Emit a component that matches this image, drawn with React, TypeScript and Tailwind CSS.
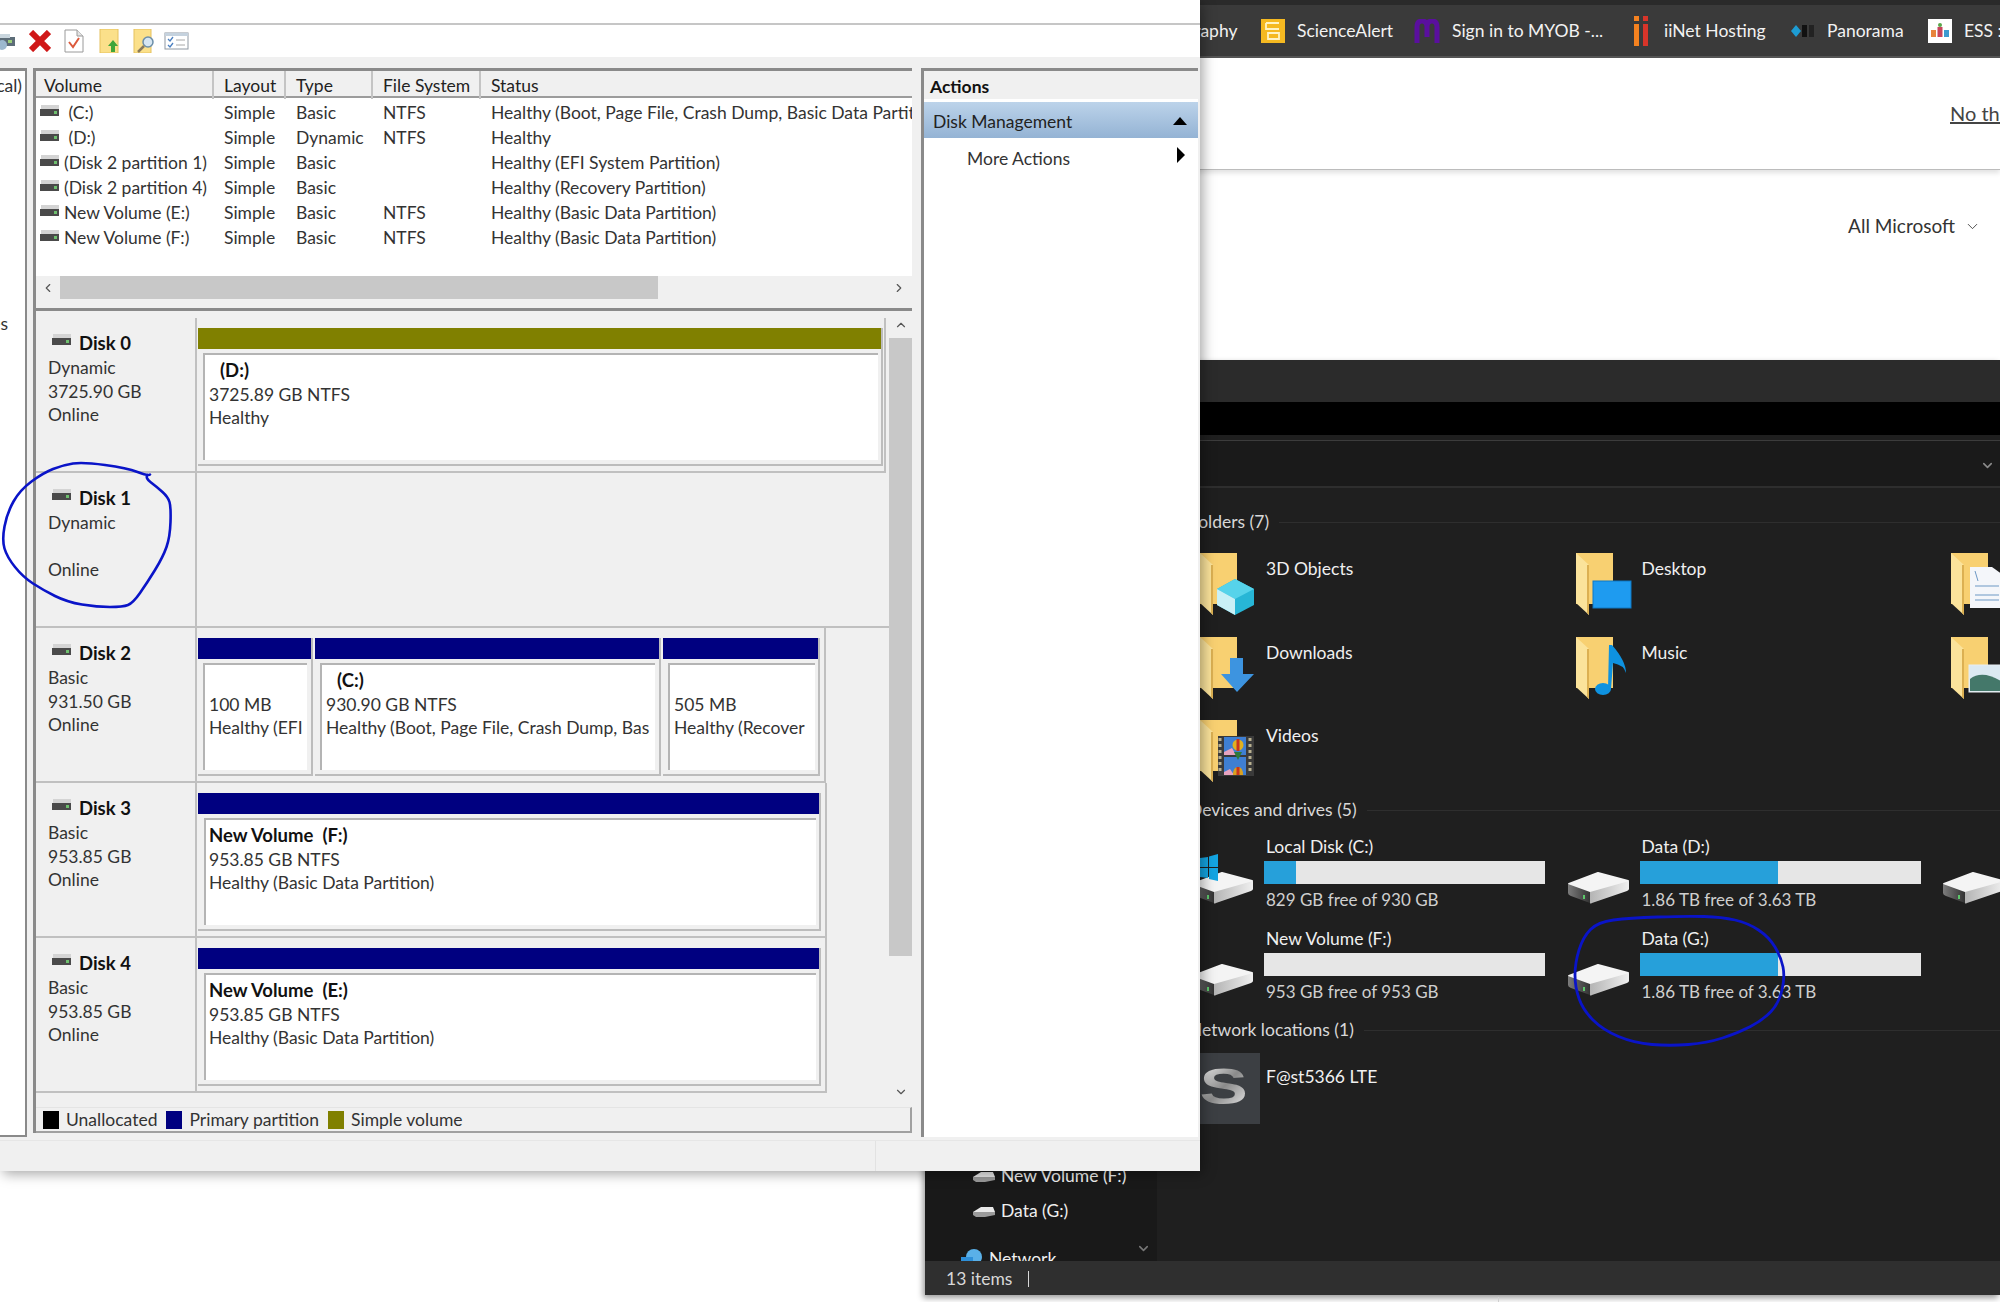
import { ChevronDown, ChevronLeft, ChevronRight, ChevronUp } from "lucide-react"

const volumes = [
  { name: "\u00a0(C:)", type: "Basic", fs: "NTFS", status: "Healthy (Boot, Page File, Crash Dump, Basic Data Partition)" },
  { name: "\u00a0(D:)", type: "Dynamic", fs: "NTFS", status: "Healthy" },
  { name: "(Disk 2 partition 1)", type: "Basic", fs: "", status: "Healthy (EFI System Partition)" },
  { name: "(Disk 2 partition 4)", type: "Basic", fs: "", status: "Healthy (Recovery Partition)" },
  { name: "New Volume (E:)", type: "Basic", fs: "NTFS", status: "Healthy (Basic Data Partition)" },
  { name: "New Volume (F:)", type: "Basic", fs: "NTFS", status: "Healthy (Basic Data Partition)" },
]

type Part = { title?: string; indent?: boolean; lines: string[]; width: string; color: string; box: string }

const disks: { name: string; kind: string; size: string; wrap: string; parts: Part[] }[] = [
  {
    name: "Disk 0",
    kind: "Dynamic",
    size: "3725.90 GB",
    wrap: "w-[689px]",
    parts: [{ title: "(D:)", indent: true, lines: ["3725.89 GB NTFS", "Healthy"], width: "w-[685px]", color: "bg-[#808000]", box: "ml-[5px] mr-[3px] pl-[4px]" }],
  },
  { name: "Disk 1", kind: "Dynamic", size: "", wrap: "w-full", parts: [] },
  {
    name: "Disk 2",
    kind: "Basic",
    size: "931.50 GB",
    wrap: "w-[629px]",
    parts: [
      { title: "", lines: ["100 MB", "Healthy (EFI"], width: "w-[115px]", color: "bg-[#000080]", box: "ml-[5px] mr-[4px] pl-[4px]" },
      { title: "(C:)", indent: true, lines: ["930.90 GB NTFS", "Healthy (Boot, Page File, Crash Dump, Bas"], width: "w-[346px]", color: "bg-[#000080]", box: "ml-[5px] mr-[4px] pl-[4px]" },
      { title: "", lines: ["505 MB", "Healthy (Recover"], width: "w-[157px]", color: "bg-[#000080]", box: "ml-[5px] mr-[3px] pl-[4px]" },
    ],
  },
  {
    name: "Disk 3",
    kind: "Basic",
    size: "953.85 GB",
    wrap: "w-[630px]",
    parts: [{ title: "New Volume  (F:)", lines: ["953.85 GB NTFS", "Healthy (Basic Data Partition)"], width: "w-[623px]", color: "bg-[#000080]", box: "ml-[6px] mr-[3px] pl-[3px]" }],
  },
  {
    name: "Disk 4",
    kind: "Basic",
    size: "953.85 GB",
    wrap: "w-[630px]",
    parts: [{ title: "New Volume  (E:)", lines: ["953.85 GB NTFS", "Healthy (Basic Data Partition)"], width: "w-[623px]", color: "bg-[#000080]", box: "ml-[6px] mr-[3px] pl-[3px]" }],
  },
]

const drives = [
  { name: "Local Disk (C:)", free: "829 GB free of 930 GB", fill: "w-[32px]", windows: true },
  { name: "Data (D:)", free: "1.86 TB free of 3.63 TB", fill: "w-[138px]" },
  { name: "New Volume (E:)", free: "953 GB free of 953 GB", fill: "w-0" },
  { name: "New Volume (F:)", free: "953 GB free of 953 GB", fill: "w-0" },
  { name: "Data (G:)", free: "1.86 TB free of 3.63 TB", fill: "w-[138px]" },
]

// quadratic curves through the midpoints, good enough for the pen marks
function smooth(pts: number[][]) {
  let d = `M${(pts[0][0] + pts[1][0]) / 2} ${(pts[0][1] + pts[1][1]) / 2}`
  for (let i = 1; i < pts.length - 1; i++) {
    d += ` Q${pts[i][0]} ${pts[i][1]} ${(pts[i][0] + pts[i + 1][0]) / 2} ${(pts[i][1] + pts[i + 1][1]) / 2}`
  }
  return d
}

const diskCircle = [
  [152, 473], [148, 476], [127, 468], [83, 462], [63, 465], [43, 473], [20, 490], [7, 513], [2, 540], [7, 557], [23, 577],
  [43, 590], [67, 602], [97, 607], [123, 607], [133, 603], [147, 583], [163, 557], [170, 537], [171, 507],
  [168, 497], [157, 487], [145, 478], [150, 472],
]
const driveCircle = [
  [1598, 922], [1629, 918], [1686, 916], [1722, 917], [1748, 923], [1769, 937], [1781, 957], [1785, 977],
  [1779, 1003], [1763, 1020], [1738, 1033], [1707, 1043], [1670, 1046], [1634, 1043], [1603, 1030], [1583, 1010],
  [1575, 987], [1575, 963], [1583, 937], [1598, 922], [1629, 918],
]

function DiskIcon() {
  return (
    <svg width="20" height="14" viewBox="0 0 20 14" className="shrink-0">
      <rect x="1" y="1" width="18" height="5" fill="#d4d4d4" />
      <rect x="0" y="5" width="19" height="7" fill="#4a4a4a" />
      <rect x="14" y="7" width="3" height="3" fill="#6ec06e" />
    </svg>
  )
}

function Toolbar() {
  return (
    <div className="flex h-[34px] shrink-0 items-center border-t-2 border-[#c6c6c6] bg-white">
      <svg width="16" height="20" viewBox="0 0 16 20" className="shrink-0">
        <rect x="-2" y="6" width="17" height="9" fill="#5d6d78" />
        <rect x="-2" y="3" width="12" height="4" fill="#c9d6de" />
        <circle cx="2" cy="14" r="5" fill="#9db9cf" />
        <rect x="8" y="9" width="4" height="3" fill="#9ccf7a" />
      </svg>
      <svg width="22" height="22" viewBox="0 0 22 22" className="ml-[13px]">
        <path d="M2 2 L20 20 M20 2 L2 20" stroke="#d01818" strokeWidth="6" />
      </svg>
      <svg width="20" height="24" viewBox="0 0 20 24" className="ml-[13px]">
        <path d="M1 1 H13 L19 7 V23 H1 Z" fill="#fff" stroke="#9a9a9a" />
        <path d="M13 1 V7 H19" fill="#e4e4e4" stroke="#9a9a9a" />
        <path d="M5 13 L9 18 L15 9" fill="none" stroke="#dc5a3c" strokeWidth="2" />
      </svg>
      <svg width="20" height="24" viewBox="0 0 20 24" className="ml-[15px]">
        <rect x="1" y="0" width="18" height="24" fill="#fbe08a" stroke="#e6c25e" />
        <path d="M14 11 L19 17 H16 V23 H12 V17 H9 Z" fill="#3fa53a" />
      </svg>
      <svg width="22" height="24" viewBox="0 0 22 24" className="ml-[14px]">
        <rect x="1" y="0" width="17" height="24" fill="#fbe08a" stroke="#e6c25e" />
        <circle cx="15" cy="13" r="5" fill="#d6e6f2" stroke="#6c8ea8" strokeWidth="1.5" />
        <path d="M11 17 L5 23" stroke="#8a7a5a" strokeWidth="2.5" />
      </svg>
      <svg width="25" height="18" viewBox="0 0 25 18" className="ml-[9px]">
        <rect x="1" y="1" width="23" height="16" fill="#fff" stroke="#8f98a2" />
        <rect x="1" y="1" width="23" height="3" fill="#c5d2de" />
        <path d="M4 7 L6 9 L9 5 M4 13 L6 15 L9 11" fill="none" stroke="#4a7fc0" strokeWidth="1.3" />
        <path d="M12 8 H21 M12 13 H21" stroke="#a8a8a8" />
      </svg>
    </div>
  )
}

function VolumeTable() {
  return (
    <div className="flex h-[205px] shrink-0 flex-col bg-white">
      <div className="grid h-[27px] shrink-0 grid-cols-[178px_72px_87px_108px_1fr] border-b-2 border-[#9c9c9c] bg-[#f0f0f0] text-[#222]">
        <div className="border-r-2 border-[#c4c4c4] pl-[8px] pt-[2px]">Volume</div>
        <div className="border-r-2 border-[#c4c4c4] pl-[10px] pt-[2px]">Layout</div>
        <div className="border-r-2 border-[#c4c4c4] pl-[10px] pt-[2px]">Type</div>
        <div className="border-r-2 border-[#c4c4c4] pl-[10px] pt-[2px]">File System</div>
        <div className="pl-[10px] pt-[2px]">Status</div>
      </div>
      <div className="flex flex-1 flex-col pt-[2px]">
        {volumes.map((v) => (
          <div key={v.name} className="grid h-[25px] shrink-0 grid-cols-[178px_72px_87px_108px_431px] items-center text-[#333]">
            <div className="flex items-center gap-[4px] whitespace-nowrap pl-[4px]">
              <span className="-mt-[5px]">
                <DiskIcon />
              </span>
              {v.name}
            </div>
            <div className="pl-[10px]">Simple</div>
            <div className="pl-[10px]">{v.type}</div>
            <div className="pl-[10px]">{v.fs}</div>
            <div className="overflow-hidden whitespace-nowrap pl-[10px]">{v.status}</div>
          </div>
        ))}
      </div>
    </div>
  )
}

function HScroll() {
  return (
    <div className="flex h-[23px] shrink-0 items-stretch bg-[#f0f0f0] text-[#555]">
      <div className="flex w-[24px] items-center justify-center">
        <ChevronLeft size={14} strokeWidth={2} />
      </div>
      <div className="w-[598px] bg-[#c8c8c8]" />
      <div className="flex flex-1 items-center justify-end pr-[6px]">
        <ChevronRight size={14} strokeWidth={2} />
      </div>
    </div>
  )
}

function DiskRow({ disk }: { disk: (typeof disks)[number] }) {
  return (
    <div className="flex h-[155px] shrink-0">
      <div className="w-[161px] shrink-0 border-r-2 border-b-2 border-[#c0c0c0] pl-[12px] pt-[14px] text-[#333]">
        <div className="flex h-[24px] items-center gap-[7px] pl-[4px] text-[18.5px] font-bold text-[#111]">
          <span className="-mt-[8px]">
            <DiskIcon />
          </span>
          {disk.name}
        </div>
        <div className="h-[23.5px] leading-[23.5px]">{disk.kind}</div>
        <div className="h-[23.5px] leading-[23.5px]">{disk.size}</div>
        <div className="h-[23.5px] leading-[23.5px]">Online</div>
      </div>
      <div className="min-w-0 flex-1">
        <div className={`flex h-full gap-[2px] border-b-2 border-[#c0c0c0] pl-[1px] pt-[10px] ${disk.parts.length ? "border-r-2" : ""} ${disk.wrap}`}>
          {disk.parts.map((p) => (
            <div key={p.lines[0]} className={`flex h-[138px] shrink-0 flex-col border-r-2 border-b-2 border-[#bcbcbc] ${p.width}`}>
              <div className={`h-[21px] shrink-0 ${p.color}`} />
              <div className={`mb-[4px] mt-[4px] flex-1 overflow-hidden whitespace-pre border-t-2 border-l-2 border-[#b4b4b4] bg-white pt-[4px] text-[#333] ${p.box}`}>
                <div className={`h-[23.5px] text-[18.5px] font-bold leading-[23.5px] text-[#111] ${p.indent ? "pl-[11px]" : ""}`}>{p.title}</div>
                {p.lines.map((l) => (
                  <div key={l} className="h-[23.5px] leading-[23.5px]">
                    {l}
                  </div>
                ))}
              </div>
            </div>
          ))}
        </div>
      </div>
    </div>
  )
}

function Legend() {
  const items = [
    { label: "Unallocated", color: "bg-black" },
    { label: "Primary partition", color: "bg-[#000080]" },
    { label: "Simple volume", color: "bg-[#808000]" },
  ]
  return (
    <div className="flex h-[26px] shrink-0 items-center gap-[9px] border-t border-r-2 border-b-2 border-t-[#e4e4e4] border-r-[#a0a0a0] border-b-[#a0a0a0] bg-[#f0f0f0] pl-[7px] pt-[1px] text-[#333]">
      {items.map((it) => (
        <div key={it.label} className="flex items-center gap-[7px]">
          <span className={`-mt-[1px] h-[18px] w-[16px] ${it.color}`} />
          {it.label}
        </div>
      ))}
    </div>
  )
}

function DiskManagement() {
  return (
    <div className="absolute left-0 top-0 flex h-[1171px] w-[1200px] flex-col bg-[#f0f0f0] shadow-[3px_3px_12px_rgba(0,0,0,0.35)]">
      <div className="h-[23px] shrink-0 bg-white" />
      <Toolbar />
      <div className="flex min-h-0 flex-1 items-stretch pt-[11px]">
        {/* tree pane, only its right edge sticks out of the crop */}
        <div className="mb-[3px] w-[27px] shrink-0 overflow-hidden border-t-[3px] border-r-2 border-b-2 border-[#8a8a8a] bg-white text-[#333]">
          <div className="flex justify-end whitespace-nowrap pt-[2px] pr-[3px]">Disk Management (Local)</div>
          <div className="mt-[212px] flex justify-end whitespace-nowrap pr-[17px]">Services</div>
        </div>
        <div className="ml-[6px] mb-[7px] flex w-[879px] shrink-0 flex-col border-t-[3px] border-l-[3px] border-[#8a8a8a]">
          <VolumeTable />
          <HScroll />
          <div className="h-[12px] shrink-0 border-b-[3px] border-[#8a8a8a]" />
          <div className="flex min-h-0 flex-1">
            <div className="min-w-0 flex-1 pt-[7px]">
              {disks.map((d) => (
                <DiskRow key={d.name} disk={d} />
              ))}
            </div>
            <div className="flex w-[23px] shrink-0 flex-col text-[#555]">
              <div className="flex h-[27px] items-center justify-center">
                <ChevronUp size={14} strokeWidth={2} />
              </div>
              <div className="h-[618px] bg-[#c8c8c8]" />
              <div className="flex-1" />
              <div className="flex h-[22px] items-start justify-center">
                <ChevronDown size={14} strokeWidth={2} />
              </div>
            </div>
          </div>
          <Legend />
        </div>
        <div className="mb-[3px] ml-[9px] flex w-[277px] shrink-0 flex-col border-t-[3px] border-l-[3px] border-[#8a8a8a] bg-white">
          <div className="flex h-[28px] shrink-0 items-center bg-[#f0f0f0] pl-[6px] pt-[5px] font-bold text-[#111]">Actions</div>
          <div className="mt-[3px] flex h-[36px] shrink-0 items-center justify-between bg-gradient-to-b from-[#bcd3ea] to-[#94b3d4] pl-[9px] pr-[10px] pt-[5px] text-[#222]">
            Disk Management
            <svg width="16" height="8" viewBox="0 0 16 8" className="-mt-[3px]">
              <path d="M8 0 L15 8 H1 Z" fill="#000" />
            </svg>
          </div>
          <div className="flex h-[38px] shrink-0 items-center justify-between pl-[43px] pr-[13px] pt-[5px] text-[#333]">
            More Actions
            <svg width="8" height="16" viewBox="0 0 8 16" className="-mt-[9px]">
              <path d="M0 0 L8 8 L0 16 Z" fill="#000" />
            </svg>
          </div>
        </div>
      </div>
      <div className="flex h-[31px] shrink-0 justify-end border-t border-[#e6e6e6] bg-[#f0f0f0]">
        <div className="w-[325px] border-l border-[#e2e2e2]" />
      </div>
    </div>
  )
}

function Bookmarks() {
  return (
    <div className="flex h-[58px] shrink-0 items-center border-t-[5px] border-b-2 border-t-[#2a2a2a] border-b-[#555] bg-[#3a3a3a] pl-[1139px] pt-[1px] text-[#f2f2f2]">
      <div className="w-[122px] shrink-0">Photography</div>
      <div className="flex w-[153px] shrink-0 items-center gap-[12px]">
        <svg width="24" height="24" viewBox="0 0 24 24" className="-mt-[1px] shrink-0">
          <rect width="24" height="24" fill="#f5b921" />
          <path d="M5 4 H18 M5 4 V10 H18 M7 14 H18 V20 H7 Z" fill="none" stroke="#fff3c4" strokeWidth="1.8" />
        </svg>
        ScienceAlert
      </div>
      <div className="flex w-[220px] shrink-0 items-center gap-[12px]">
        <svg width="26" height="24" viewBox="0 0 26 24" className="-mt-[1px] shrink-0">
          <path d="M3 24 V8 Q3 2 8 2 Q13 2 13 8 V18 M13 8 Q13 2 18 2 Q23 2 23 8 V24" fill="none" stroke="#5a0f9e" strokeWidth="5" />
        </svg>
        {"Sign in to MYOB -..."}
      </div>
      <div className="flex w-[157px] shrink-0 items-center gap-[16px]">
        <svg width="14" height="30" viewBox="0 0 14 30" className="-mt-[1px] shrink-0">
          <rect x="0" y="0" width="5" height="5" fill="#f58220" />
          <rect x="0" y="8" width="5" height="22" fill="#f58220" />
          <rect x="9" y="0" width="5" height="5" fill="#d8352a" />
          <rect x="9" y="8" width="5" height="22" fill="#d8352a" />
        </svg>
        iiNet Hosting
      </div>
      <div className="flex w-[137px] shrink-0 items-center gap-[12px]">
        <svg width="24" height="16" viewBox="0 0 24 16" className="-mt-[1px] shrink-0">
          <path d="M5 2 L10 8 L5 14 L0 8 Z" fill="#1d9cd3" />
          <rect x="11" y="2" width="5" height="12" fill="#111" />
          <rect x="18" y="2" width="5" height="12" fill="#222" />
        </svg>
        Panorama
      </div>
      <div className="flex shrink-0 items-center gap-[12px] whitespace-nowrap">
        <svg width="24" height="24" viewBox="0 0 24 24" className="-mt-[1px] shrink-0">
          <rect width="24" height="24" fill="#fff" />
          <rect x="3" y="11" width="5" height="7" fill="#e8843c" />
          <rect x="9.5" y="8" width="5" height="10" fill="#c8455c" />
          <rect x="16" y="11" width="5" height="7" fill="#3c9ad0" />
          <circle cx="12" cy="6" r="2" fill="#5aa64a" />
        </svg>
        ESS : Employee Self Service
      </div>
    </div>
  )
}

function Folder({ kind }: { kind: string }) {
  return (
    <svg width="54" height="62" viewBox="0 0 54 62" className="shrink-0 overflow-visible">
      <rect x="0" y="0" width="37" height="51" fill="#f8d071" />
      <path d="M0 0 L13 12 V62 L0 50 Z" fill="#fbe39b" />
      <path d="M13 12 V62 L11 60 V12 Z" fill="#dcb052" />
      {kind === "cube" && (
        <g>
          <path d="M35 26 L54 36 V52 L35 62 L17 52 V36 Z" fill="#27b6d6" />
          <path d="M35 26 L54 36 L35 46 L17 36 Z" fill="#56d3ea" />
          <path d="M17 36 L35 46 V62 L17 52 Z" fill="#c9f0f6" />
        </g>
      )}
      {kind === "desktop" && <rect x="17" y="28" width="38" height="27" fill="#1e9bf0" stroke="#0f78c4" />}
      {kind === "down" && <path d="M30 21 H43 V37 H54 L37 55 L21 37 H30 Z" fill="#3d94e0" />}
      {kind === "music" && (
        <g>
          <ellipse cx="27" cy="52" rx="8" ry="6" fill="#0e92e0" />
          <path d="M33 8 L36 8 Q50 24 50 36 Q48 28 37 26 L35 52 L32 52 Z" fill="#0e92e0" />
        </g>
      )}
      {kind === "video" && (
        <g>
          <rect x="18" y="16" width="36" height="40" fill="#3a3a3a" />
          <path d="M20 18 V54 M50 18 V54" stroke="#b8b090" strokeWidth="3" strokeDasharray="3 3" />
          <rect x="24" y="17" width="22" height="18" fill="#3f7fd2" />
          <rect x="24" y="37" width="22" height="18" fill="#3f7fd2" />
          <path d="M24 32 L32 28 L36 35 H24 Z M24 52 L30 49 L34 55 H24 Z" fill="#e7a3c0" />
          <circle cx="38" cy="25" r="5.5" fill="#e0b020" />
          <path d="M38 19 V31" stroke="#c8341e" strokeWidth="3" />
          <path d="M34 32 H42 L38 40 Z" fill="#2e7a3c" />
          <path d="M33 55 Q33 47 38 47 Q43 47 43 55 Z" fill="#d9a020" />
          <path d="M38 47 V55" stroke="#c8341e" strokeWidth="3" />
        </g>
      )}
      {kind === "doc" && (
        <g>
          <path d="M19 14 H41 L52 22 V55 H19 Z" fill="#f4f6fa" />
          <path d="M24 18 L27 28 M24 33 H48 M24 42 H48 M24 47 H48" stroke="#6d98c4" />
        </g>
      )}
      {kind === "photo" && (
        <g>
          <rect x="18" y="28" width="36" height="27" fill="#dbe9f2" stroke="#e8eef2" />
          <path d="M19 42 Q32 32 53 46 V54 H19 Z" fill="#44786a" />
        </g>
      )}
    </svg>
  )
}

function Drive() {
  return (
    <svg width="61" height="33" viewBox="0 0 61 33" className="shrink-0">
      <defs>
        <linearGradient id="driveFront" x1="0" x2="1" y1="0" y2="0">
          <stop offset="0" stopColor="#b4b4b4" />
          <stop offset="1" stopColor="#efefef" />
        </linearGradient>
        <linearGradient id="driveSide" x1="0" x2="1" y1="0" y2="0">
          <stop offset="0" stopColor="#7c7c7c" />
          <stop offset="1" stopColor="#333" />
        </linearGradient>
      </defs>
      <path d="M30 1 L60 9 L22 20 L1 12 Z" fill="#f4f4f4" stroke="#f4f4f4" strokeWidth="2" strokeLinejoin="round" />
      <path d="M22 20 L61 9 V17 Q61 18 59 19 L24 31 Q22 32 22 31 Z" fill="url(#driveFront)" />
      <path d="M0 12 L22 20 V31 L3 24 Q0 23 0 21 Z" fill="url(#driveSide)" />
      <rect x="15" y="23" width="2" height="4" fill="#5cc86a" />
    </svg>
  )
}

function SmallDrive() {
  return (
    <svg width="22" height="12" viewBox="0 0 22 12" className="shrink-0">
      <path d="M8 1 H20 L22 6 H0 Z" fill="#e8e8e8" />
      <path d="M0 6 H22 V9 L12 11 H3 L0 9 Z" fill="#9a9a9a" />
    </svg>
  )
}

function Section({ title }: { title: string }) {
  return (
    <div className="flex h-[24px] shrink-0 items-center gap-[10px] text-[#d8d8d8]">
      <span className="whitespace-nowrap">{title}</span>
      <span className="h-px flex-1 bg-[#2e2e2e]" />
    </div>
  )
}

function Explorer() {
  const folders = [
    { name: "3D Objects", kind: "cube" },
    { name: "Desktop", kind: "desktop" },
    { name: "Documents", kind: "doc" },
    { name: "Downloads", kind: "down" },
    { name: "Music", kind: "music" },
    { name: "Pictures", kind: "photo" },
    { name: "Videos", kind: "video" },
  ]
  return (
    <div className="absolute left-[925px] top-[360px] flex h-[935px] w-[1075px] flex-col bg-[#1f1f1f] shadow-[-2px_3px_6px_rgba(0,0,0,0.4)]">
      <div className="h-[42px] shrink-0 bg-[#2b2b2b]" />
      <div className="h-[33px] shrink-0 bg-black" />
      <div className="h-[6px] shrink-0 border-b border-[#3c3c3c] bg-[#1f1f1f]" />
      <div className="flex h-[47px] shrink-0 items-center justify-end border-b-2 border-[#2e2e2e] bg-[#1a1a1a] pr-[5px] pt-[4px] text-[#8a8a8a]">
        <ChevronDown size={15} strokeWidth={2.5} />
      </div>
      <div className="flex min-h-0 flex-1">
        <div className="relative flex w-[232px] shrink-0 flex-col justify-end overflow-hidden bg-[#191919] text-[#efefef]">
          <div className="-mb-[16px] pl-[48px]">
            <div className="flex h-[35px] items-center gap-[6px] whitespace-nowrap">
              <SmallDrive />
              New Volume (F:)
            </div>
            <div className="flex h-[35px] items-center gap-[6px] whitespace-nowrap">
              <SmallDrive />
              Data (G:)
            </div>
            <div className="-ml-[12px] mt-[12px] flex h-[36px] items-center gap-[7px] whitespace-nowrap">
              <svg width="21" height="20" viewBox="0 0 21 20" className="shrink-0">
                <circle cx="13" cy="8" r="8" fill="#5ab0e8" />
                <path d="M0 8 H12 V20 H0 Z" fill="#2e8fd8" />
              </svg>
              Network
            </div>
          </div>
          <span className="absolute bottom-[5px] right-[6px] text-[#777]">
            <ChevronDown size={15} strokeWidth={2.5} />
          </span>
        </div>
        <div className="min-w-0 flex-1 overflow-hidden pl-[32px] pt-[22px]">
          <Section title="Folders (7)" />
          <div className="ml-[11px] mt-[19px] grid grid-cols-[375.5px_375.5px_375.5px] gap-y-[21.5px]">
            {folders.map((f) => (
              <div key={f.name} className="flex h-[62px] gap-[12px] text-[#f0f0f0]">
                <Folder kind={f.kind} />
                <span className="pt-[3px]">{f.name}</span>
              </div>
            ))}
          </div>
          <div className="mt-[16px]">
            <Section title="Devices and drives (5)" />
          </div>
          <div className="ml-[11px] mt-[13px] grid grid-cols-[375.5px_375.5px_375.5px] gap-y-[15px]">
            {drives.map((d) => (
              <div key={d.name} className="flex h-[77px]">
                <div className="relative -ml-[8px] w-[72px] shrink-0 pt-[37px]">
                  {d.windows && (
                    <svg width="18" height="27" viewBox="0 0 18 27" className="absolute left-[8px] top-[19px]">
                      <path d="M0 4 L8 3 V13 H0 Z M9 2.5 L18 0 V13 H9 Z M0 14 H8 V24 L0 23 Z M9 14 H18 V27 L9 25 Z" fill="#14a5e2" />
                    </svg>
                  )}
                  <Drive />
                </div>
                <div className="w-[281px] shrink-0">
                  <div className="h-[24px] pl-[2px] leading-[24px] text-[#f0f0f0]">{d.name}</div>
                  <div className="mt-[2px] h-[23px] bg-[#e6e6e6]">
                    <div className={`h-full bg-[#26a0da] ${d.fill}`} />
                  </div>
                  <div className="mt-[4px] h-[24px] whitespace-nowrap pl-[2px] text-[17px] leading-[24px] text-[#cfcfcf]">{d.free}</div>
                </div>
              </div>
            ))}
          </div>
          <div className="mt-[14px]">
            <Section title="Network locations (1)" />
          </div>
          <div className="-ml-px mt-[11px] flex gap-[6px] text-[#f0f0f0]">
            <div className="flex h-[71px] w-[72px] shrink-0 items-center justify-center bg-[#3c3f43] pb-[4px]">
              <span className="scale-x-[1.45] bg-gradient-to-br from-[#ffffff] via-[#8a8a8a] to-[#f2f2f2] bg-clip-text font-[Liberation_Sans,sans-serif] text-[50px] font-bold leading-none text-transparent">
                S
              </span>
            </div>
            <span className="pt-[11px]">F@st5366 LTE</span>
          </div>
        </div>
      </div>
      <div className="flex h-[34px] shrink-0 items-center gap-[16px] bg-[#2f2f2f] pl-[21px] pt-[2px] text-[#d8d8d8]">
        13 items
        <span className="h-[16px] w-px bg-[#d8d8d8]" />
      </div>
    </div>
  )
}

export default function App() {
  return (
    <div className="relative h-[1302px] w-[2000px] overflow-hidden bg-white font-[Lato,sans-serif] text-[17.5px]">
      <Bookmarks />
      <div className="flex h-[112px] items-center border-b border-[#bcbcbc] pb-[2px] pl-[1950px] shadow-[0_3px_5px_rgba(0,0,0,0.12)]">
        <span className="whitespace-nowrap text-[20px] text-[#444] underline">No thanks</span>
      </div>
      <div className="flex items-center justify-end gap-[9px] pr-[19px] pt-[42px] text-[19px] text-[#333]">
        All Microsoft
        <ChevronDown size={17} strokeWidth={1.2} />
      </div>
      <Explorer />
      <span className="absolute bottom-0 left-[1498px] h-[5px] w-px bg-[#cfcfcf]" />
      <DiskManagement />
      {/* pen marks on top of the screenshot */}
      <svg width="2000" height="1302" viewBox="0 0 2000 1302" className="pointer-events-none absolute left-0 top-0">
        <path d={smooth(diskCircle)} fill="none" stroke="#0a14c8" strokeWidth="2.6" strokeLinecap="round" />
        <path d={smooth(driveCircle)} fill="none" stroke="#0a14c8" strokeWidth="2.8" strokeLinecap="round" />
      </svg>
    </div>
  )
}
